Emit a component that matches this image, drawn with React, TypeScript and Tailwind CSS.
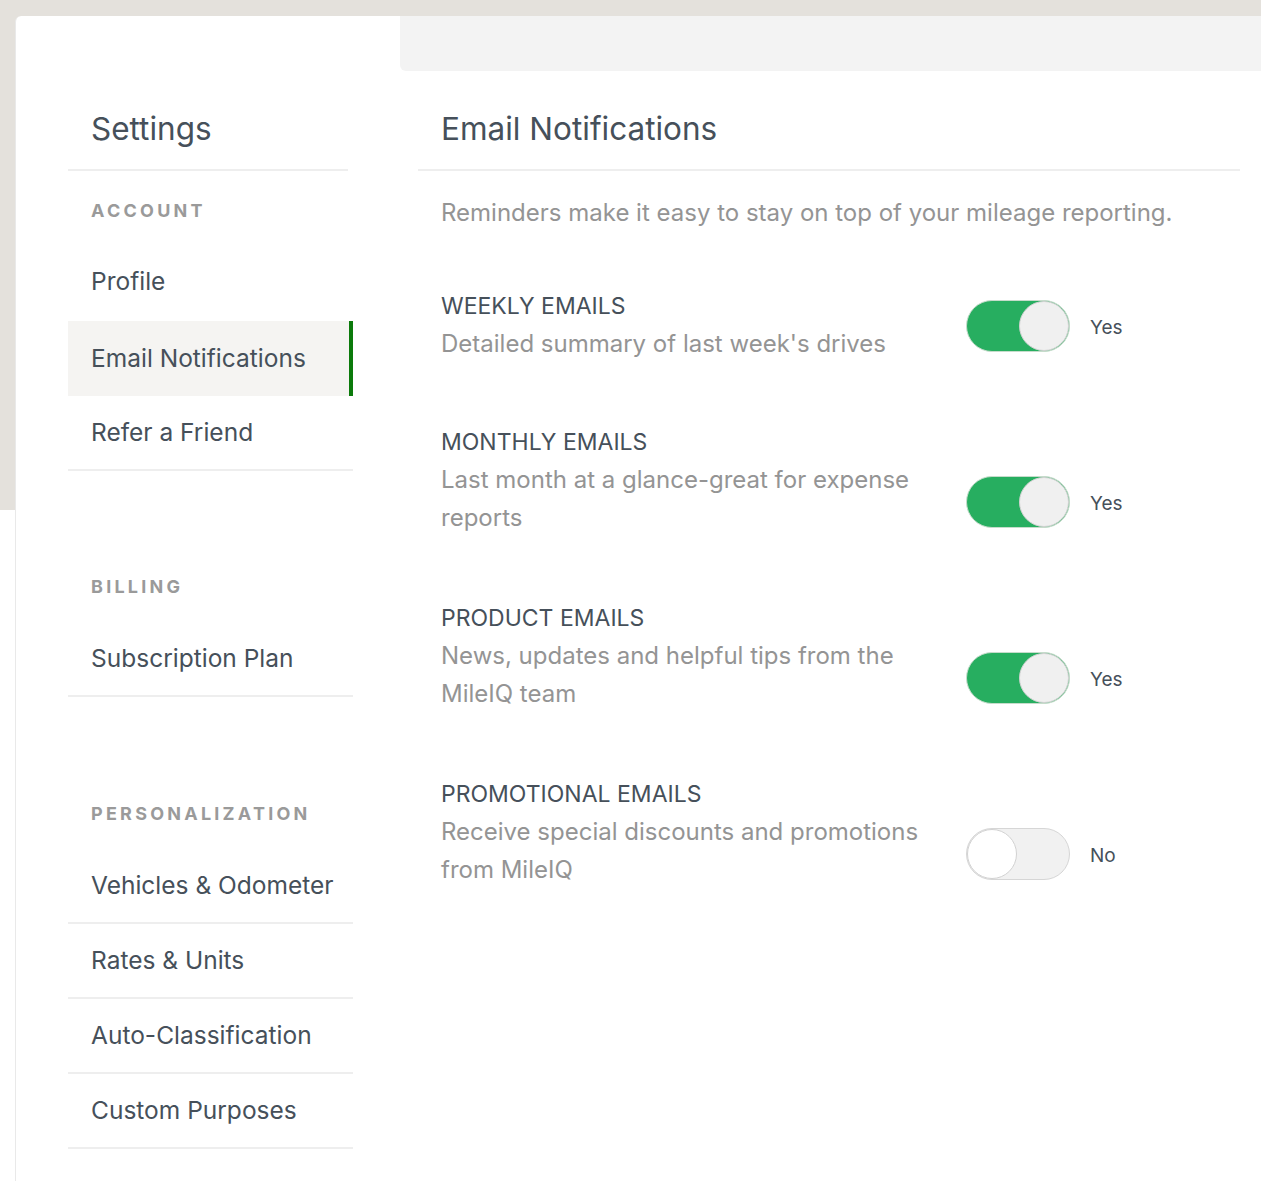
import React from "react";

type Pref = {
  title: string;
  lines: string[];
  on: boolean;
  offset: string;
  top: string;
};

const prefs: Pref[] = [
  { title: "WEEKLY EMAILS", lines: ["Detailed summary of last week's drives"], on: true, offset: "mt-[13px]", top: "mt-[55px]" },
  { title: "MONTHLY EMAILS", lines: ["Last month at a glance-great for expense", "reports"], on: true, offset: "mt-[53px]", top: "mt-[60px]" },
  { title: "PRODUCT EMAILS", lines: ["News, updates and helpful tips from the", "MileIQ team"], on: true, offset: "mt-[53px]", top: "mt-[62px]" },
  { title: "PROMOTIONAL EMAILS", lines: ["Receive special discounts and promotions", "from MileIQ"], on: false, offset: "mt-[53px]", top: "mt-[62px]" },
];

function Toggle({ on }: { on: boolean }) {
  return (
    <div
      className={
        on
          ? "flex h-[52px] w-[104px] items-center justify-end rounded-full border border-[#c6dccb] bg-[#27ae60]"
          : "flex h-[52px] w-[104px] items-center justify-start rounded-full border border-[#d6d6d6] bg-[#f1f1f1]"
      }
    >
      <div
        className={
          on
            ? "h-[50px] w-[50px] rounded-full border border-[#d2d2d2] bg-[#f0f0f0]"
            : "h-[50px] w-[50px] rounded-full border border-[#d2d2d2] bg-white"
        }
      />
    </div>
  );
}

function Label({ children }: { children: React.ReactNode }) {
  return (
    <div className="flex h-[75px] items-center pl-[23px] pt-[4px] text-[18px] font-bold tracking-[0.18em] text-[#9a9a9a]">
      {children}
    </div>
  );
}

function Item({
  children,
  active,
  border,
  lift,
}: {
  children: React.ReactNode;
  active?: boolean;
  border?: boolean;
  lift?: boolean;
}) {
  let cls = "flex h-[75px] w-[285px] items-center pl-[23px] text-[24.5px] text-[#46505a]";
  if (active) cls += " bg-[#f5f4f2] border-r-4 border-[#0b7a0b]";
  if (border) cls += " border-b-2 border-[#eeeeee]";
  if (lift) cls += " pb-[5px]";
  return <div className={cls}>{children}</div>;
}

export default function App() {
  return (
    <div className="min-h-[1181px] w-full bg-[linear-gradient(to_bottom,#e4e1dc_0px,#e4e1dc_510px,#ffffff_510px)] pl-[15px] pt-[16px] font-['Inter',sans-serif]">
      <div className="flex min-h-[1165px] rounded-tl-[6px] border-l border-[#e9e9e9] bg-white">
        {/* Sidebar */}
        <div className="w-[384px] shrink-0 pl-[52px]">
          <div className="w-[280px] border-b-2 border-[#eeeeee] pb-[20px] pl-[23px] pt-[93px] text-[31.5px] leading-[40px] text-[#46505a]">
            Settings
          </div>
          <Label>ACCOUNT</Label>
          <Item lift>Profile</Item>
          <Item active>Email Notifications</Item>
          <Item border>Refer a Friend</Item>
          <div className="h-[76px]" />
          <Label>BILLING</Label>
          <Item border>Subscription Plan</Item>
          <div className="h-[77px]" />
          <Label>PERSONALIZATION</Label>
          <Item border>Vehicles &amp; Odometer</Item>
          <Item border>Rates &amp; Units</Item>
          <Item border>Auto-Classification</Item>
          <Item border>Custom Purposes</Item>
        </div>

        {/* Main */}
        <div className="flex-1">
          <div className="h-[55px] rounded-bl-[6px] bg-[#f3f3f3]" />
          <div className="ml-[18px] mr-[21px]">
            <div className="border-b-2 border-[#eeeeee] pb-[20px] pl-[23px] pt-[38px] text-[31.5px] leading-[40px] text-[#46505a]">
              Email Notifications
            </div>
            <div className="pl-[23px]">
              <p className="mt-[23px] text-[24px] leading-[38px] text-[#949494]">
                Reminders make it easy to stay on top of your mileage reporting.
              </p>
              <div className="flex flex-col">
                {prefs.map((p) => (
                  <div key={p.title} className={"flex items-start " + p.top}>
                    <div className="w-[525px] shrink-0">
                      <div className="text-[23px] leading-[38px] text-[#46505a]">{p.title}</div>
                      <div className="text-[24px] leading-[38px] text-[#949494]">
                        {p.lines.map((l, i) => (
                          <div key={i} className="whitespace-nowrap">{l}</div>
                        ))}
                      </div>
                    </div>
                    <div className={"flex items-center " + p.offset}>
                      <Toggle on={p.on} />
                      <span className="ml-[20px] mt-[4px] text-[19px] text-[#46505a]">{p.on ? "Yes" : "No"}</span>
                    </div>
                  </div>
                ))}
              </div>
            </div>
          </div>
        </div>
      </div>
    </div>
  );
}
